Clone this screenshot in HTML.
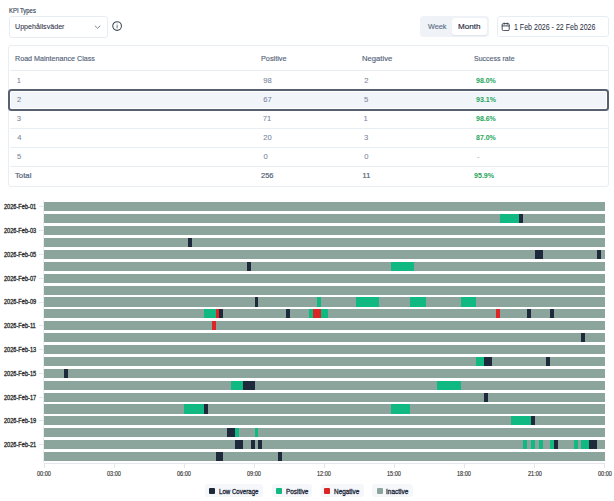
<!DOCTYPE html><html><head><meta charset="utf-8"><style>
html,body{margin:0;padding:0;background:#fff;width:614px;height:501px;overflow:hidden;position:relative;font-family:"Liberation Sans", sans-serif;}
.a{position:absolute;}
.t{position:absolute;white-space:nowrap;transform-origin:0 0;}
.bar{position:absolute;background:#8ba59c;}
.s{position:absolute;}

</style></head><body>
<div class="a" style="left:9px;top:16.1px;width:97.1px;height:19.9px;border:1px solid #e8edf3;border-radius:3px;background:#fff"></div>
<svg class="a" style="left:93.5px;top:23.5px" width="7" height="6" viewBox="0 0 7 6"><path d="M1.1 1.9 L3.6 4.3 L6.1 1.9" fill="none" stroke="#6b7585" stroke-width="0.85" stroke-linecap="round" stroke-linejoin="round"/></svg>
<svg class="a" style="left:111px;top:19.8px" width="12" height="12" viewBox="0 0 12 12"><circle cx="6.1" cy="6" r="4.35" fill="none" stroke="#3f4856" stroke-width="1.05"/><path d="M6.1 5.5 V7.9" stroke="#3f4856" stroke-width="0.8" stroke-linecap="round"/><circle cx="6.1" cy="4.0" r="0.45" fill="#3f4856"/></svg>
<div class="a" style="left:420px;top:16.4px;width:68.6px;height:20.8px;border-radius:3.5px;background:#eff3f8"></div>
<div class="a" style="left:452.2px;top:18.2px;width:35.2px;height:17px;border-radius:3px;background:#fff;box-shadow:0 0.5px 1px rgba(0,0,0,0.06)"></div>
<div class="a" style="left:497.3px;top:16.2px;width:109.6px;height:19.3px;border:1px solid #e8edf3;border-radius:3px;background:#fff"></div>
<svg class="a" style="left:501.2px;top:22.1px" width="9.4" height="9.4" viewBox="0 0 24 24"><rect x="3" y="4" width="18" height="18" rx="3" fill="none" stroke="#3f4856" stroke-width="2.5"/><path d="M8 2.5V6M16 2.5V6M3 10H21" stroke="#3f4856" stroke-width="2.5" stroke-linecap="round"/></svg>
<div class="a" style="left:8.3px;top:45.3px;width:599.1px;height:139.9px;border:1px solid #e9eef5;border-radius:3px"></div>
<div class="a" style="left:9.6px;top:69.8px;width:598.8px;height:1px;background:#e9eef5"></div>
<div class="a" style="left:9.6px;top:127.85px;width:598.8px;height:1px;background:#e9eef5"></div>
<div class="a" style="left:9.6px;top:146.9px;width:598.8px;height:1px;background:#e9eef5"></div>
<div class="a" style="left:9.6px;top:166px;width:598.8px;height:1px;background:#e9eef5"></div>
<div class="a" style="left:8px;top:89.1px;width:597.2px;height:17.6px;border:2px solid #586170;border-radius:3.5px;background:#f1f5f9;box-shadow:inset 0 0 0 1px #fff"></div>
<div class="a" style="left:43.1px;top:200.4px;width:1px;height:262.8px;background:#eaedf1"></div>
<div class="a" style="left:43.6px;top:462.7px;width:561.7px;height:1px;background:#e3e6eb"></div>
<div class="a" style="left:39.4px;top:206.39px;width:4px;height:1px;background:#e2e5ea"></div>
<div class="a" style="left:39.4px;top:230.17px;width:4px;height:1px;background:#e2e5ea"></div>
<div class="a" style="left:39.4px;top:253.95px;width:4px;height:1px;background:#e2e5ea"></div>
<div class="a" style="left:39.4px;top:277.73px;width:4px;height:1px;background:#e2e5ea"></div>
<div class="a" style="left:39.4px;top:301.51px;width:4px;height:1px;background:#e2e5ea"></div>
<div class="a" style="left:39.4px;top:325.3px;width:4px;height:1px;background:#e2e5ea"></div>
<div class="a" style="left:39.4px;top:349.07px;width:4px;height:1px;background:#e2e5ea"></div>
<div class="a" style="left:39.4px;top:372.85px;width:4px;height:1px;background:#e2e5ea"></div>
<div class="a" style="left:39.4px;top:396.63px;width:4px;height:1px;background:#e2e5ea"></div>
<div class="a" style="left:39.4px;top:420.42px;width:4px;height:1px;background:#e2e5ea"></div>
<div class="a" style="left:39.4px;top:444.19px;width:4px;height:1px;background:#e2e5ea"></div>
<div class="a" style="left:43.85px;top:463.2px;width:1px;height:4.4px;background:#e2e5ea"></div>
<div class="a" style="left:113.91px;top:463.2px;width:1px;height:4.4px;background:#e2e5ea"></div>
<div class="a" style="left:183.96px;top:463.2px;width:1px;height:4.4px;background:#e2e5ea"></div>
<div class="a" style="left:254.02px;top:463.2px;width:1px;height:4.4px;background:#e2e5ea"></div>
<div class="a" style="left:324.07px;top:463.2px;width:1px;height:4.4px;background:#e2e5ea"></div>
<div class="a" style="left:394.13px;top:463.2px;width:1px;height:4.4px;background:#e2e5ea"></div>
<div class="a" style="left:464.19px;top:463.2px;width:1px;height:4.4px;background:#e2e5ea"></div>
<div class="a" style="left:534.24px;top:463.2px;width:1px;height:4.4px;background:#e2e5ea"></div>
<div class="a" style="left:604.3px;top:463.2px;width:1px;height:4.4px;background:#e2e5ea"></div>
<div class="bar" style="left:44.35px;top:202.34px;width:560.45px;height:9.1px"></div>
<div class="bar" style="left:44.35px;top:214.23px;width:560.45px;height:9.1px"></div>
<div class="s" style="left:499.71px;top:214.23px;width:19.46px;height:9.1px;background:#10b981"></div>
<div class="s" style="left:519.17px;top:214.23px;width:3.89px;height:9.1px;background:#1e293b"></div>
<div class="bar" style="left:44.35px;top:226.12px;width:560.45px;height:9.1px"></div>
<div class="bar" style="left:44.35px;top:238.02px;width:560.45px;height:9.1px"></div>
<div class="s" style="left:188.35px;top:238.02px;width:3.89px;height:9.1px;background:#1e293b"></div>
<div class="bar" style="left:44.35px;top:249.91px;width:560.45px;height:9.1px"></div>
<div class="s" style="left:534.74px;top:249.91px;width:7.78px;height:9.1px;background:#1e293b"></div>
<div class="s" style="left:597.01px;top:249.91px;width:3.89px;height:9.1px;background:#1e293b"></div>
<div class="bar" style="left:44.35px;top:261.79px;width:560.45px;height:9.1px"></div>
<div class="s" style="left:246.73px;top:261.79px;width:3.89px;height:9.1px;background:#1e293b"></div>
<div class="s" style="left:390.74px;top:261.79px;width:23.35px;height:9.1px;background:#10b981"></div>
<div class="bar" style="left:44.35px;top:273.68px;width:560.45px;height:9.1px"></div>
<div class="bar" style="left:44.35px;top:285.57px;width:560.45px;height:9.1px"></div>
<div class="bar" style="left:44.35px;top:297.46px;width:560.45px;height:9.1px"></div>
<div class="s" style="left:254.52px;top:297.46px;width:3.89px;height:9.1px;background:#1e293b"></div>
<div class="s" style="left:316.79px;top:297.46px;width:3.89px;height:9.1px;background:#10b981"></div>
<div class="s" style="left:355.71px;top:297.46px;width:23.35px;height:9.1px;background:#10b981"></div>
<div class="s" style="left:410.2px;top:297.46px;width:15.57px;height:9.1px;background:#10b981"></div>
<div class="s" style="left:460.79px;top:297.46px;width:15.57px;height:9.1px;background:#10b981"></div>
<div class="bar" style="left:44.35px;top:309.35px;width:560.45px;height:9.1px"></div>
<div class="s" style="left:203.92px;top:309.35px;width:11.68px;height:9.1px;background:#10b981"></div>
<div class="s" style="left:215.6px;top:309.35px;width:3.89px;height:9.1px;background:#dc2626"></div>
<div class="s" style="left:219.49px;top:309.35px;width:3.89px;height:9.1px;background:#1e293b"></div>
<div class="s" style="left:285.65px;top:309.35px;width:3.89px;height:9.1px;background:#1e293b"></div>
<div class="s" style="left:309.01px;top:309.35px;width:3.89px;height:9.1px;background:#10b981"></div>
<div class="s" style="left:312.9px;top:309.35px;width:7.78px;height:9.1px;background:#dc2626"></div>
<div class="s" style="left:320.68px;top:309.35px;width:7.78px;height:9.1px;background:#10b981"></div>
<div class="s" style="left:495.82px;top:309.35px;width:3.89px;height:9.1px;background:#dc2626"></div>
<div class="s" style="left:526.96px;top:309.35px;width:3.89px;height:9.1px;background:#1e293b"></div>
<div class="s" style="left:550.31px;top:309.35px;width:3.89px;height:9.1px;background:#1e293b"></div>
<div class="bar" style="left:44.35px;top:321.25px;width:560.45px;height:9.1px"></div>
<div class="s" style="left:211.71px;top:321.25px;width:3.89px;height:9.1px;background:#dc2626"></div>
<div class="bar" style="left:44.35px;top:333.13px;width:560.45px;height:9.1px"></div>
<div class="s" style="left:581.45px;top:333.13px;width:3.89px;height:9.1px;background:#1e293b"></div>
<div class="bar" style="left:44.35px;top:345.02px;width:560.45px;height:9.1px"></div>
<div class="bar" style="left:44.35px;top:356.91px;width:560.45px;height:9.1px"></div>
<div class="s" style="left:476.36px;top:356.91px;width:7.78px;height:9.1px;background:#10b981"></div>
<div class="s" style="left:484.15px;top:356.91px;width:7.78px;height:9.1px;background:#1e293b"></div>
<div class="s" style="left:546.42px;top:356.91px;width:3.89px;height:9.1px;background:#1e293b"></div>
<div class="bar" style="left:44.35px;top:368.8px;width:560.45px;height:9.1px"></div>
<div class="s" style="left:63.81px;top:368.8px;width:3.89px;height:9.1px;background:#1e293b"></div>
<div class="bar" style="left:44.35px;top:380.69px;width:560.45px;height:9.1px"></div>
<div class="s" style="left:231.17px;top:380.69px;width:11.68px;height:9.1px;background:#10b981"></div>
<div class="s" style="left:242.84px;top:380.69px;width:11.68px;height:9.1px;background:#1e293b"></div>
<div class="s" style="left:437.44px;top:380.69px;width:23.35px;height:9.1px;background:#10b981"></div>
<div class="bar" style="left:44.35px;top:392.58px;width:560.45px;height:9.1px"></div>
<div class="s" style="left:484.15px;top:392.58px;width:3.89px;height:9.1px;background:#1e293b"></div>
<div class="bar" style="left:44.35px;top:404.47px;width:560.45px;height:9.1px"></div>
<div class="s" style="left:184.46px;top:404.47px;width:19.46px;height:9.1px;background:#10b981"></div>
<div class="s" style="left:203.92px;top:404.47px;width:3.89px;height:9.1px;background:#1e293b"></div>
<div class="s" style="left:390.74px;top:404.47px;width:19.46px;height:9.1px;background:#10b981"></div>
<div class="bar" style="left:44.35px;top:416.37px;width:560.45px;height:9.1px"></div>
<div class="s" style="left:511.39px;top:416.37px;width:19.46px;height:9.1px;background:#10b981"></div>
<div class="s" style="left:530.85px;top:416.37px;width:3.89px;height:9.1px;background:#1e293b"></div>
<div class="bar" style="left:44.35px;top:428.25px;width:560.45px;height:9.1px"></div>
<div class="s" style="left:227.27px;top:428.25px;width:7.78px;height:9.1px;background:#1e293b"></div>
<div class="s" style="left:235.06px;top:428.25px;width:3.89px;height:9.1px;background:#10b981"></div>
<div class="s" style="left:254.52px;top:428.25px;width:3.89px;height:9.1px;background:#10b981"></div>
<div class="bar" style="left:44.35px;top:440.14px;width:560.45px;height:9.1px"></div>
<div class="s" style="left:235.06px;top:440.14px;width:7.78px;height:9.1px;background:#1e293b"></div>
<div class="s" style="left:250.63px;top:440.14px;width:3.89px;height:9.1px;background:#1e293b"></div>
<div class="s" style="left:258.41px;top:440.14px;width:3.89px;height:9.1px;background:#1e293b"></div>
<div class="s" style="left:523.07px;top:440.14px;width:3.89px;height:9.1px;background:#10b981"></div>
<div class="s" style="left:530.85px;top:440.14px;width:3.89px;height:9.1px;background:#10b981"></div>
<div class="s" style="left:538.63px;top:440.14px;width:3.89px;height:9.1px;background:#10b981"></div>
<div class="s" style="left:550.31px;top:440.14px;width:3.89px;height:9.1px;background:#10b981"></div>
<div class="s" style="left:554.2px;top:440.14px;width:3.89px;height:9.1px;background:#1e293b"></div>
<div class="s" style="left:573.66px;top:440.14px;width:3.89px;height:9.1px;background:#10b981"></div>
<div class="s" style="left:581.45px;top:440.14px;width:7.78px;height:9.1px;background:#10b981"></div>
<div class="s" style="left:589.23px;top:440.14px;width:7.78px;height:9.1px;background:#1e293b"></div>
<div class="bar" style="left:44.35px;top:452.03px;width:560.45px;height:9.1px"></div>
<div class="s" style="left:215.6px;top:452.03px;width:7.78px;height:9.1px;background:#1e293b"></div>
<div class="s" style="left:277.87px;top:452.03px;width:3.89px;height:9.1px;background:#1e293b"></div>
<div class="a" style="left:205.2px;top:484.3px;width:57.6px;height:12.5px;border-radius:3px;background:#f5f7fa"></div>
<div class="a" style="left:209.1px;top:487.8px;width:6.1px;height:5.9px;border-radius:1px;background:#1e293b"></div>
<div class="a" style="left:271.7px;top:484.3px;width:40.2px;height:12.5px;border-radius:3px;background:#f5f7fa"></div>
<div class="a" style="left:275.7px;top:487.8px;width:6.1px;height:5.9px;border-radius:1px;background:#10b981"></div>
<div class="a" style="left:320.5px;top:484.3px;width:43.6px;height:12.5px;border-radius:3px;background:#f5f7fa"></div>
<div class="a" style="left:324.4px;top:487.8px;width:6.1px;height:5.9px;border-radius:1px;background:#dc2626"></div>
<div class="a" style="left:372.3px;top:484.3px;width:40.7px;height:12.5px;border-radius:3px;background:#f5f7fa"></div>
<div class="a" style="left:376.8px;top:487.8px;width:6.1px;height:5.9px;border-radius:1px;background:#8ba59c"></div>
<div class="t" id="kpi" style="left:8.510px;top:6.696px;font-size:6.5px;line-height:7.800px;font-weight:400;color:#334155;transform:scaleX(0.9097);-webkit-text-stroke:0.15px #334155;">KPI Types</div>
<div class="t" id="sel" style="left:15.189px;top:21.597px;font-size:7.6px;line-height:9.120px;font-weight:400;color:#1e293b;transform:scaleX(0.9376);-webkit-text-stroke:0.05px #1e293b;">Uppehållsväder</div>
<div class="t" id="week" style="left:427.753px;top:21.701px;font-size:8.0px;line-height:9.600px;font-weight:400;color:#64748b;transform:scaleX(0.9102);-webkit-text-stroke:0.2px #64748b;">Week</div>
<div class="t" id="month" style="left:458.147px;top:21.701px;font-size:8.0px;line-height:9.600px;font-weight:400;color:#1e293b;transform:scaleX(1.0103);-webkit-text-stroke:0.15px #1e293b;">Month</div>
<div class="t" id="date" style="left:514.396px;top:22.701px;font-size:8.3px;line-height:9.960px;font-weight:400;color:#1e293b;transform:scaleX(0.8490);">1 Feb 2026 - 22 Feb 2026</div>
<div class="t" id="h1" style="left:15.480px;top:54.514px;font-size:7.3px;line-height:8.760px;font-weight:400;color:#55647a;transform:scaleX(0.9794);-webkit-text-stroke:0.15px #55647a;">Road Maintenance Class</div>
<div class="t" id="h2" style="left:260.996px;top:54.514px;font-size:7.3px;line-height:8.760px;font-weight:400;color:#55647a;transform:scaleX(0.9974);-webkit-text-stroke:0.15px #55647a;">Positive</div>
<div class="t" id="h3" style="left:361.728px;top:54.514px;font-size:7.3px;line-height:8.760px;font-weight:400;color:#55647a;transform:scaleX(1.0493);-webkit-text-stroke:0.15px #55647a;">Negative</div>
<div class="t" id="h4" style="left:473.953px;top:54.514px;font-size:7.3px;line-height:8.760px;font-weight:400;color:#55647a;transform:scaleX(0.9618);-webkit-text-stroke:0.15px #55647a;">Success rate</div>
<div class="t" id="r0a" style="left:16.816px;top:75.735px;font-size:7.6px;line-height:9.120px;font-weight:400;color:#77849a;-webkit-text-stroke:0.06px #77849a;">1</div>
<div class="t" id="r0b" style="left:263.326px;top:75.735px;font-size:7.6px;line-height:9.120px;font-weight:400;color:#77849a;-webkit-text-stroke:0.06px #77849a;">98</div>
<div class="t" id="r0c" style="left:364.227px;top:75.735px;font-size:7.6px;line-height:9.120px;font-weight:400;color:#77849a;-webkit-text-stroke:0.06px #77849a;">2</div>
<div class="t" id="r0d" style="left:476.295px;top:75.529px;font-size:8.0px;line-height:9.600px;font-weight:700;color:#22a559;transform:scaleX(0.8744);">98.0%</div>
<div class="t" id="r1a" style="left:17.013px;top:94.612px;font-size:7.6px;line-height:9.120px;font-weight:400;color:#77849a;-webkit-text-stroke:0.06px #77849a;">2</div>
<div class="t" id="r1b" style="left:263.257px;top:94.612px;font-size:7.6px;line-height:9.120px;font-weight:400;color:#77849a;-webkit-text-stroke:0.06px #77849a;">67</div>
<div class="t" id="r1c" style="left:364.000px;top:94.612px;font-size:7.6px;line-height:9.120px;font-weight:400;color:#77849a;-webkit-text-stroke:0.06px #77849a;">5</div>
<div class="t" id="r1d" style="left:476.151px;top:94.849px;font-size:8.0px;line-height:9.600px;font-weight:700;color:#22a559;transform:scaleX(0.8791);">93.1%</div>
<div class="t" id="r2a" style="left:16.791px;top:113.505px;font-size:7.6px;line-height:9.120px;font-weight:400;color:#77849a;-webkit-text-stroke:0.06px #77849a;">3</div>
<div class="t" id="r2b" style="left:262.864px;top:113.505px;font-size:7.6px;line-height:9.120px;font-weight:400;color:#77849a;-webkit-text-stroke:0.06px #77849a;">71</div>
<div class="t" id="r2c" style="left:363.621px;top:113.505px;font-size:7.6px;line-height:9.120px;font-weight:400;color:#77849a;-webkit-text-stroke:0.06px #77849a;">1</div>
<div class="t" id="r2d" style="left:476.472px;top:113.899px;font-size:8.0px;line-height:9.600px;font-weight:700;color:#22a559;transform:scaleX(0.8739);">98.6%</div>
<div class="t" id="r3a" style="left:17.172px;top:132.610px;font-size:7.6px;line-height:9.120px;font-weight:400;color:#77849a;-webkit-text-stroke:0.06px #77849a;">4</div>
<div class="t" id="r3b" style="left:263.338px;top:132.610px;font-size:7.6px;line-height:9.120px;font-weight:400;color:#77849a;-webkit-text-stroke:0.06px #77849a;">20</div>
<div class="t" id="r3c" style="left:363.951px;top:132.610px;font-size:7.6px;line-height:9.120px;font-weight:400;color:#77849a;-webkit-text-stroke:0.06px #77849a;">3</div>
<div class="t" id="r3d" style="left:476.271px;top:133.049px;font-size:8.0px;line-height:9.600px;font-weight:700;color:#22a559;transform:scaleX(0.8714);">87.0%</div>
<div class="t" id="r4a" style="left:16.875px;top:151.701px;font-size:7.6px;line-height:9.120px;font-weight:400;color:#77849a;-webkit-text-stroke:0.06px #77849a;">5</div>
<div class="t" id="r4b" style="left:263.476px;top:151.701px;font-size:7.6px;line-height:9.120px;font-weight:400;color:#77849a;-webkit-text-stroke:0.06px #77849a;">0</div>
<div class="t" id="r4c" style="left:364.326px;top:151.701px;font-size:7.6px;line-height:9.120px;font-weight:400;color:#77849a;-webkit-text-stroke:0.06px #77849a;">0</div>
<div class="t" id="r4d" style="left:477.017px;top:152.650px;font-size:7.3px;line-height:8.760px;font-weight:400;color:#94a3b8;-webkit-text-stroke:0.15px #94a3b8;">-</div>
<div class="t" id="ta" style="left:14.949px;top:171.645px;font-size:7.3px;line-height:8.760px;font-weight:400;color:#56657b;transform:scaleX(1.0619);-webkit-text-stroke:0.2px #56657b;">Total</div>
<div class="t" id="tb" style="left:261.379px;top:171.645px;font-size:7.3px;line-height:8.760px;font-weight:400;color:#56657b;transform:scaleX(1.0291);-webkit-text-stroke:0.2px #56657b;">256</div>
<div class="t" id="tc" style="left:362.617px;top:171.645px;font-size:7.3px;line-height:8.760px;font-weight:400;color:#56657b;-webkit-text-stroke:0.2px #56657b;">11</div>
<div class="t" id="td" style="left:474.421px;top:170.678px;font-size:8.0px;line-height:9.600px;font-weight:700;color:#22a559;transform:scaleX(0.8850);">95.9%</div>
<div class="t" id="yl0" style="left:4.051px;top:203.292px;font-size:6.3px;line-height:7.560px;font-weight:400;color:#2b2b2b;transform:scaleX(0.8914);-webkit-text-stroke:0.3px #2b2b2b;">2026-Feb-01</div>
<div class="t" id="yl2" style="left:4.051px;top:227.072px;font-size:6.3px;line-height:7.560px;font-weight:400;color:#2b2b2b;transform:scaleX(0.8914);-webkit-text-stroke:0.3px #2b2b2b;">2026-Feb-03</div>
<div class="t" id="yl4" style="left:4.051px;top:250.852px;font-size:6.3px;line-height:7.560px;font-weight:400;color:#2b2b2b;transform:scaleX(0.8914);-webkit-text-stroke:0.3px #2b2b2b;">2026-Feb-05</div>
<div class="t" id="yl6" style="left:4.051px;top:274.632px;font-size:6.3px;line-height:7.560px;font-weight:400;color:#2b2b2b;transform:scaleX(0.8914);-webkit-text-stroke:0.3px #2b2b2b;">2026-Feb-07</div>
<div class="t" id="yl8" style="left:4.051px;top:298.412px;font-size:6.3px;line-height:7.560px;font-weight:400;color:#2b2b2b;transform:scaleX(0.8914);-webkit-text-stroke:0.3px #2b2b2b;">2026-Feb-09</div>
<div class="t" id="yl10" style="left:4.051px;top:322.192px;font-size:6.3px;line-height:7.560px;font-weight:400;color:#2b2b2b;transform:scaleX(0.8914);-webkit-text-stroke:0.3px #2b2b2b;">2026-Feb-11</div>
<div class="t" id="yl12" style="left:4.051px;top:345.972px;font-size:6.3px;line-height:7.560px;font-weight:400;color:#2b2b2b;transform:scaleX(0.8914);-webkit-text-stroke:0.3px #2b2b2b;">2026-Feb-13</div>
<div class="t" id="yl14" style="left:4.051px;top:369.752px;font-size:6.3px;line-height:7.560px;font-weight:400;color:#2b2b2b;transform:scaleX(0.8914);-webkit-text-stroke:0.3px #2b2b2b;">2026-Feb-15</div>
<div class="t" id="yl16" style="left:4.051px;top:393.532px;font-size:6.3px;line-height:7.560px;font-weight:400;color:#2b2b2b;transform:scaleX(0.8914);-webkit-text-stroke:0.3px #2b2b2b;">2026-Feb-17</div>
<div class="t" id="yl18" style="left:4.051px;top:417.312px;font-size:6.3px;line-height:7.560px;font-weight:400;color:#2b2b2b;transform:scaleX(0.8914);-webkit-text-stroke:0.3px #2b2b2b;">2026-Feb-19</div>
<div class="t" id="yl20" style="left:4.051px;top:441.092px;font-size:6.3px;line-height:7.560px;font-weight:400;color:#2b2b2b;transform:scaleX(0.8914);-webkit-text-stroke:0.3px #2b2b2b;">2026-Feb-21</div>
<div class="t" id="xl0" style="left:37.141px;top:469.674px;font-size:6.3px;line-height:7.560px;font-weight:400;color:#333333;transform:scaleX(0.8869);-webkit-text-stroke:0.15px #333333;">00:00</div>
<div class="t" id="xl1" style="left:107.197px;top:469.674px;font-size:6.3px;line-height:7.560px;font-weight:400;color:#333333;transform:scaleX(0.8869);-webkit-text-stroke:0.15px #333333;">03:00</div>
<div class="t" id="xl2" style="left:177.253px;top:469.674px;font-size:6.3px;line-height:7.560px;font-weight:400;color:#333333;transform:scaleX(0.8869);-webkit-text-stroke:0.15px #333333;">06:00</div>
<div class="t" id="xl3" style="left:247.309px;top:469.674px;font-size:6.3px;line-height:7.560px;font-weight:400;color:#333333;transform:scaleX(0.8869);-webkit-text-stroke:0.15px #333333;">09:00</div>
<div class="t" id="xl4" style="left:317.365px;top:469.674px;font-size:6.3px;line-height:7.560px;font-weight:400;color:#333333;transform:scaleX(0.8869);-webkit-text-stroke:0.15px #333333;">12:00</div>
<div class="t" id="xl5" style="left:387.421px;top:469.674px;font-size:6.3px;line-height:7.560px;font-weight:400;color:#333333;transform:scaleX(0.8869);-webkit-text-stroke:0.15px #333333;">15:00</div>
<div class="t" id="xl6" style="left:457.477px;top:469.674px;font-size:6.3px;line-height:7.560px;font-weight:400;color:#333333;transform:scaleX(0.8869);-webkit-text-stroke:0.15px #333333;">18:00</div>
<div class="t" id="xl7" style="left:527.533px;top:469.674px;font-size:6.3px;line-height:7.560px;font-weight:400;color:#333333;transform:scaleX(0.8869);-webkit-text-stroke:0.15px #333333;">21:00</div>
<div class="t" id="xl8" style="left:597.589px;top:469.674px;font-size:6.3px;line-height:7.560px;font-weight:400;color:#333333;transform:scaleX(0.8869);-webkit-text-stroke:0.15px #333333;">00:00</div>
<div class="t" id="lg1" style="left:219.336px;top:487.636px;font-size:6.5px;line-height:7.800px;font-weight:400;color:#1e293b;transform:scaleX(0.9410);-webkit-text-stroke:0.3px #1e293b;">Low Coverage</div>
<div class="t" id="lg2" style="left:285.854px;top:487.636px;font-size:6.5px;line-height:7.800px;font-weight:400;color:#1e293b;transform:scaleX(0.9847);-webkit-text-stroke:0.3px #1e293b;">Positive</div>
<div class="t" id="lg3" style="left:334.467px;top:487.636px;font-size:6.5px;line-height:7.800px;font-weight:400;color:#1e293b;transform:scaleX(0.9864);-webkit-text-stroke:0.3px #1e293b;">Negative</div>
<div class="t" id="lg4" style="left:386.246px;top:487.636px;font-size:6.5px;line-height:7.800px;font-weight:400;color:#1e293b;transform:scaleX(0.9932);-webkit-text-stroke:0.3px #1e293b;">Inactive</div>
</body></html>
